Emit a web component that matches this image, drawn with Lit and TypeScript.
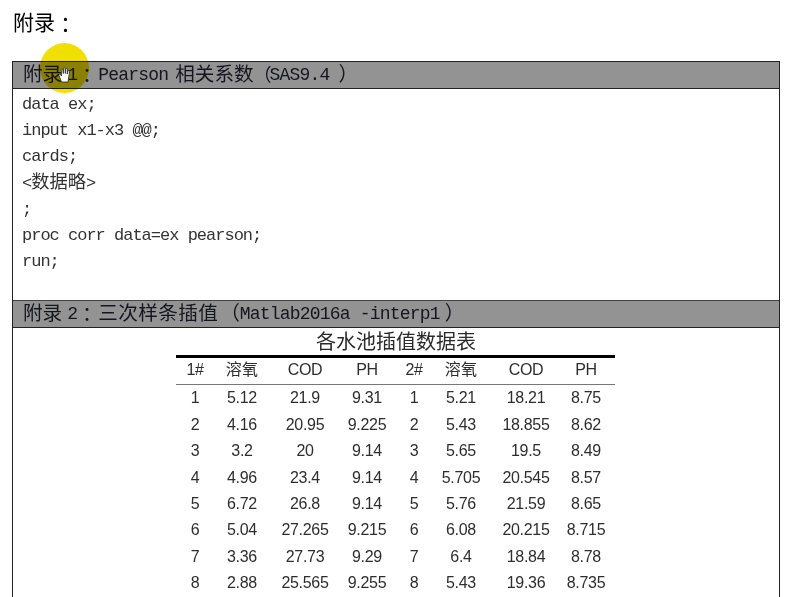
import { LitElement, html, css } from "lit";
import { customElement } from "lit/decorators.js";

const before = ["data ex;", "input x1-x3 @@;", "cards;"];
const after = [";", "proc corr data=ex pearson;", "run;"];
const head = ["1#", "溶氧", "COD", "PH", "2#", "溶氧", "COD", "PH"];
const rows = [
  [1, "5.12", "21.9", "9.31", 1, "5.21", "18.21", "8.75"],
  [2, "4.16", "20.95", "9.225", 2, "5.43", "18.855", "8.62"],
  [3, "3.2", "20", "9.14", 3, "5.65", "19.5", "8.49"],
  [4, "4.96", "23.4", "9.14", 4, "5.705", "20.545", "8.57"],
  [5, "6.72", "26.8", "9.14", 5, "5.76", "21.59", "8.65"],
  [6, "5.04", "27.265", "9.215", 6, "6.08", "20.215", "8.715"],
  [7, "3.36", "27.73", "9.29", 7, "6.4", "18.84", "8.78"],
  [8, "2.88", "25.565", "9.255", 8, "5.43", "19.36", "8.735"],
];

@customElement("app-root")
export class AppRoot extends LitElement {
  static styles = css`
    :host {
      display: block;
      position: relative;
      width: 788px;
      height: 597px;
      overflow: hidden;
      background: #fff;
      color: #1c1c1c;
      font-family: "Liberation Sans", "Noto Sans CJK SC", sans-serif;
    }
    .page {
      padding: 8px 8px 0 12px;
      filter: blur(0.35px);
    }
    h1 {
      margin: 0 0 0 1px;
      height: 53px;
      font-size: 21px;
      line-height: 27px;
      font-weight: 400;
      color: #000;
      font-family: "Noto Sans CJK SC", sans-serif;
    }
    h1 .colon {
      font-family: "Noto Sans CJK TC", sans-serif;
      vertical-align: -2px;
    }
    .frame {
      border: 1px solid #222;
      border-bottom: none;
      height: 700px;
    }
    .bar {
      height: 25px;
      padding: 1px 0 0 10px;
      line-height: 24px;
      background: #939393;
      border-bottom: 1px solid #222;
      font-family: "Liberation Mono", "Noto Sans CJK SC", monospace;
      font-size: 18px;
      letter-spacing: -0.8px;
      color: #15151f;
      white-space: pre;
    }
    .bar.second {
      border-top: 1px solid #444;
    }
    .cjk {
      font-family: "Noto Sans CJK SC", sans-serif;
      font-size: 19.6px;
      letter-spacing: 0;
      line-height: 1;
    }
    .bar .cjk {
      vertical-align: -1px;
    }
    .num {
      margin-left: 5px;
    }
    .bar .colon {
      font-family: "Noto Sans CJK TC", sans-serif;
      margin-right: 1.4px;
      vertical-align: -3px;
    }
    .bar .wide {
      letter-spacing: 0.4px;
    }
    .after-latin {
      margin-left: 7px;
    }
    .bar .open-sas {
      font-size: 18px;
      letter-spacing: -2px;
    }
    .close-sas {
      margin-left: 9px;
    }
    .open-mat {
      margin-left: 2px;
    }
    .close-mat {
      margin-left: 5px;
    }
    .code {
      height: 208px;
      padding: 3px 0 0 9px;
      font-family: "Liberation Mono", "Noto Sans CJK SC", monospace;
      font-size: 17px;
      letter-spacing: -1px;
      line-height: 26.2px;
      color: #333;
    }
    .code div {
      white-space: pre;
    }
    .code .cjk {
      font-size: 18.3px;
    }
    .data {
      width: 439px;
      margin-left: 163px;
    }
    .caption {
      text-align: center;
      height: 27px;
      line-height: 26px;
      font-size: 20px;
      font-family: "Noto Sans CJK SC", sans-serif;
      color: #2a2a2a;
      padding-left: 1px;
    }
    table {
      width: 439px;
      border-collapse: collapse;
      table-layout: fixed;
      border-top: 3px solid #000;
      font-size: 16px;
      letter-spacing: -0.3px;
      color: #2e2e2e;
    }
    th, td {
      padding: 0;
      text-align: center;
      font-weight: 400;
      height: 26.45px;
    }
    th {
      border-bottom: 1px solid #777;
      height: 28px;
      line-height: 20px;
      padding-bottom: 3px;
      box-sizing: border-box;
    }
    th.zh {
      letter-spacing: 0.3px;
    }
    th:last-child, td:last-child {
      padding-right: 7px;
    }
    .c1 { width: 38px; }
    .c2 { width: 56px; }
    .c3 { width: 70px; }
    .c4 { width: 54px; }
    .c5 { width: 40px; }
    .c6 { width: 54px; }
    .c7 { width: 76px; }
    .c8 { width: 51px; }
    .spot {
      position: absolute;
      left: 40px;
      top: 43px;
      width: 49px;
      height: 50px;
      border-radius: 50%;
      background: #f0e000;
      mix-blend-mode: multiply;
      filter: blur(0.5px);
    }
    .hand {
      position: absolute;
      left: 58px;
      top: 67px;
      width: 13px;
      height: 16px;
    }
  `;

  render() {
    return html`
      <div class="page">
        <h1>附录<span class="colon">：</span></h1>
        <div class="frame">
          <div class="bar"><span class="cjk">附录</span><span class="num">1</span><span class="cjk colon">：</span>Pearson<span class="cjk after-latin">相关系数</span><span class="cjk open-sas">（</span>SAS9.4<span class="cjk close-sas">）</span></div>
          <div class="code">
            ${before.map((l) => html`<div>${l}</div>`)}
            <div>&lt;<span class="cjk">数据略</span>&gt;</div>
            ${after.map((l) => html`<div>${l}</div>`)}
          </div>
          <div class="bar second"><span class="cjk">附录</span><span class="num">2</span><span class="cjk colon">：</span><span class="cjk wide">三次样条插值</span><span class="cjk open-mat">（</span>Matlab2016a -interp1<span class="cjk close-mat">）</span></div>
          <div class="data">
            <div class="caption">各水池插值数据表</div>
            <table>
              <colgroup>
                ${[1, 2, 3, 4, 5, 6, 7, 8].map((n) => html`<col class="c${n}" />`)}
              </colgroup>
              <thead>
                <tr>${head.map((h) => html`<th class=${h === "溶氧" ? "zh" : ""}>${h}</th>`)}</tr>
              </thead>
              <tbody>
                ${rows.map((r) => html`<tr>${r.map((c) => html`<td>${c}</td>`)}</tr>`)}
              </tbody>
            </table>
          </div>
        </div>
      </div>
      <div class="spot"></div>
      <svg class="hand" viewBox="0 0 13 16">
        <path d="M3.5 15 L1 8.5 C0.6 7.3 2 6.8 2.7 7.8 L3.6 9 L3.2 3 C3.1 1.8 4.7 1.8 4.9 3 L5.3 6.5 L5.4 1.6 C5.5 0.5 7 0.5 7.1 1.6 L7.3 6.5 L7.9 2.2 C8.1 1.1 9.6 1.3 9.5 2.5 L9.2 7 L10.2 3.8 C10.5 2.8 11.9 3.2 11.7 4.3 L10.8 9.5 L10 15 Z" fill="#fff" stroke="#222" stroke-width="0.8" />
      </svg>
    `;
  }
}
